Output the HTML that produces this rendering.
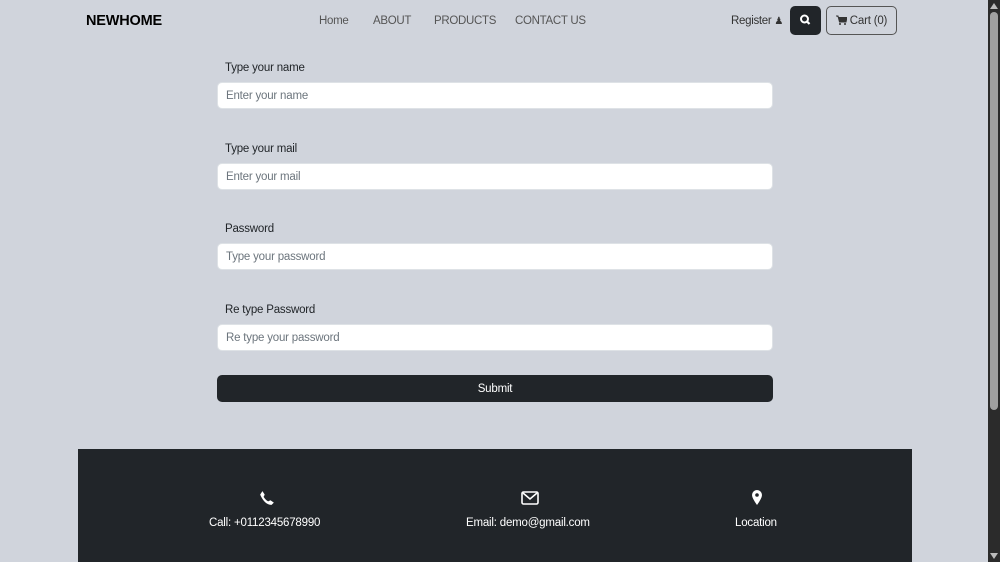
<!DOCTYPE html>
<html><head><style>
body{margin:0;width:1000px;height:562px;overflow:hidden;background:#d0d4dc;font-family:"Liberation Sans",sans-serif;color:#212529;position:relative;letter-spacing:-0.2px}
.a{position:absolute}
.brand{left:86px;top:13px;font-weight:bold;font-size:14.5px;color:#000;letter-spacing:-0.2px}
.nav{top:15px;font-size:11.5px;color:#555;letter-spacing:-0.3px}
label{position:absolute;left:225px;font-size:11.5px;color:#212529}
.in{position:absolute;left:217px;height:27px;background:#fff;border:1px solid #dee2e6;border-radius:5px;font-size:11.5px;color:#6c757d;line-height:27px;padding-left:8px;box-sizing:border-box;width:556px}
.btn{left:217px;top:375px;width:556px;height:27px;background:#212529;border-radius:5px;color:#fff;font-size:11.5px;text-align:center;line-height:28px}
.foot{left:78px;top:449px;width:834px;height:113px;background:#212529;color:#fff;font-size:11.5px}
.sb{left:988px;top:0;width:12px;height:562px;background:#2b2b2b}
</style></head><body>
<div class="a brand">NEWHOME</div>
<div class="a nav" style="left:319px">Home</div>
<div class="a nav" style="left:373px">ABOUT</div>
<div class="a nav" style="left:434px">PRODUCTS</div>
<div class="a nav" style="left:515px">CONTACT US</div>
<div class="a nav" style="left:731px;color:#333">Register <span style="font-size:10px">&#9823;</span></div>
<div class="a" style="left:790px;top:6px;width:31px;height:29px;background:#212529;border-radius:5px"><svg width="31" height="29"><circle cx="14.5" cy="13" r="3.5" stroke="#fff" stroke-width="2" fill="none"/><line x1="17" y1="15.5" x2="19.5" y2="18" stroke="#fff" stroke-width="2.2"/></svg></div>
<div class="a" style="left:826px;top:6px;width:69px;height:27px;border:1px solid #555;border-radius:5px;font-size:11.5px;color:#333;line-height:28px;text-align:center"><svg width="11" height="10" style="vertical-align:-1px"><path d="M0 1 H2 L3.5 7 H10 L11 2.5 H2.6" fill="#333" stroke="#333"/><circle cx="4" cy="9" r="1" fill="#333"/><circle cx="9" cy="9" r="1" fill="#333"/></svg> Cart (0)</div>
<label style="top:62px">Type your name</label><div class="in" style="top:82px">Enter your name</div>
<label style="top:143px">Type your mail</label><div class="in" style="top:163px">Enter your mail</div>
<label style="top:223px">Password</label><div class="in" style="top:243px">Type your password</div>
<label style="top:304px">Re type Password</label><div class="in" style="top:324px">Re type your password</div>
<div class="a btn">Submit</div>
<div class="a foot">
<svg class="a" style="left:181px;top:41px" width="16" height="16" viewBox="0 0 14 14"><path d="M3 1 L5 4 L4 6 Q6 9 8 10 L10 9 L13 11 L11 13 Q5 13 1 4 Z" fill="#fff"/></svg>
<div class="a" style="left:131px;top:68px">Call: +0112345678990</div>
<svg class="a" style="left:443px;top:42px" width="18" height="15"><rect x="1" y="1" width="16" height="12" rx="1.5" fill="none" stroke="#fff" stroke-width="1.6"/><path d="M2 2 L9 8 L16 2" fill="none" stroke="#fff" stroke-width="1.6"/></svg>
<div class="a" style="left:388px;top:68px">Email: demo@gmail.com</div>
<svg class="a" style="left:674px;top:41px" width="10" height="16"><path d="M5 0 A5 5 0 0 1 10 5 Q10 8 5 15 Q0 8 0 5 A5 5 0 0 1 5 0Z" fill="#fff"/><circle cx="5" cy="5" r="1.8" fill="#212529"/></svg>
<div class="a" style="left:657px;top:68px">Location</div>
</div>
<div class="a sb"><svg class="a" style="left:2px;top:3px" width="8" height="6"><path d="M4 0 L8 6 H0Z" fill="#bbb"/></svg><div class="a" style="left:2px;top:12px;width:8px;height:398px;background:#a0a0a0;border-radius:4px"></div><svg class="a" style="left:2px;top:553px" width="8" height="6"><path d="M4 6 L8 0 H0Z" fill="#bbb"/></svg></div>
</body></html>
